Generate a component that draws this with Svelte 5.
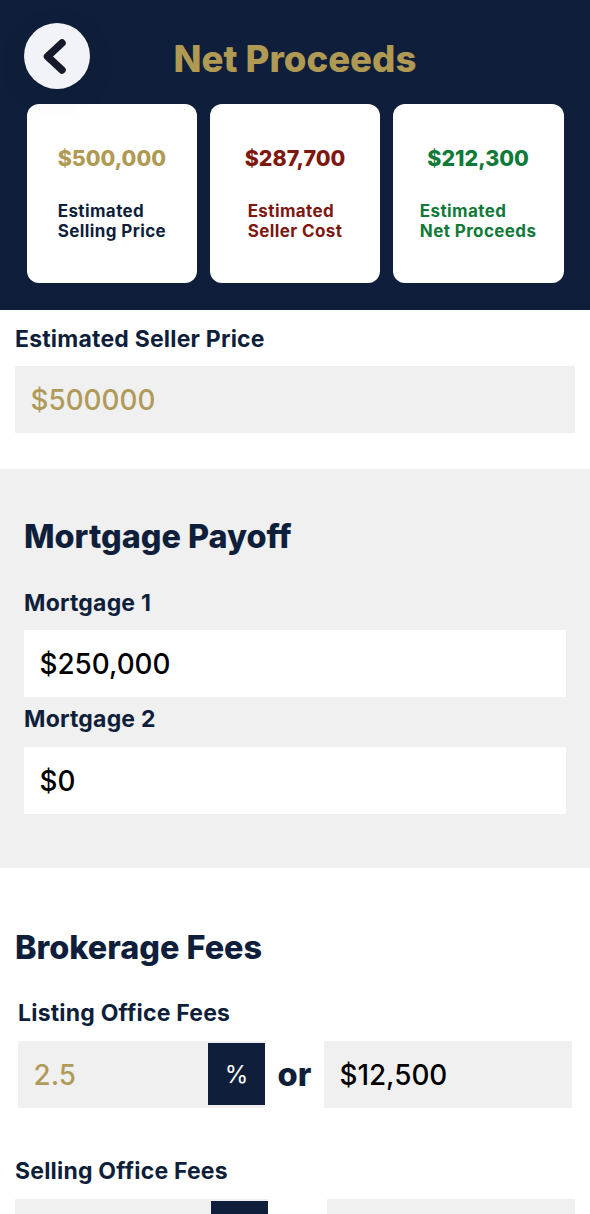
<script>
  const cards = [
    { value: '$500,000', label: ['Estimated', 'Selling Price'], tone: 'gold' },
    { value: '$287,700', label: ['Estimated', 'Seller Cost'], tone: 'red' },
    { value: '$212,300', label: ['Estimated', 'Net Proceeds'], tone: 'green' }
  ];
</script>

<div class="page">
  <header class="header">
    <div class="top">
      <h1>Net Proceeds</h1>
      <button class="back" aria-label="Back">
        <svg width="66" height="66" viewBox="0 0 66 66" fill="none">
          <path d="M38 20 L23.5 33.5 L38 47" stroke="#16192a" stroke-width="7.5" stroke-linecap="round" stroke-linejoin="round" />
        </svg>
      </button>
    </div>
    <div class="cards">
      {#each cards as c}
        <div class="card {c.tone}">
          <div class="value">{c.value}</div>
          <div class="label">{c.label[0]}<br />{c.label[1]}</div>
        </div>
      {/each}
    </div>
  </header>

  <section class="price">
    <div class="field-label">Estimated Seller Price</div>
    <div class="input grey gold-text">$500000</div>
  </section>

  <section class="mortgage">
    <h2>Mortgage Payoff</h2>
    <div class="field-label m1">Mortgage 1</div>
    <div class="input white">$250,000</div>
    <div class="field-label m2">Mortgage 2</div>
    <div class="input white">$0</div>
  </section>

  <section class="brokerage">
    <h2>Brokerage Fees</h2>
    <div class="fee listing">
      <div class="field-label">Listing Office Fees</div>
      <div class="fee-row">
        <div class="percent grey">
          <span class="gold-text">2.5</span>
          <div class="unit">%</div>
        </div>
        <div class="or">or</div>
        <div class="input grey amount">$12,500</div>
      </div>
    </div>
    <div class="fee selling">
      <div class="field-label">Selling Office Fees</div>
      <div class="fee-row">
        <div class="percent grey">
          <div class="unit"></div>
        </div>
        <div class="or"></div>
        <div class="input grey amount"></div>
      </div>
    </div>
  </section>
</div>

<style>
  :global(body) {
    margin: 0;
    background: #fff;
  }
  .page {
    width: 590px;
    height: 1214px;
    overflow: hidden;
    font-family: Inter, "Noto Sans", sans-serif;
    color: #0f1f3b;
  }
  .header {
    box-sizing: border-box;
    height: 310px;
    background: #0f1f3b;
    padding-top: 23px;
  }
  .top {
    display: flex;
    justify-content: center;
    height: 66px;
    position: relative;
  }
  .back {
    position: absolute;
    z-index: 1;
    left: 24px;
    top: 0;
    width: 66px;
    height: 66px;
    border: 0;
    padding: 0;
    border-radius: 50%;
    background: #f1f3f8;
    box-shadow: 0 8px 28px rgba(0, 0, 0, 0.1);
  }
  .back svg {
    display: block;
  }
  h1 {
    margin: 0;
    font-size: 36.6px;
    line-height: 72px;
    font-weight: 800;
    color: #b09a53;
  }
  .cards {
    display: flex;
    gap: 12.33px;
    padding: 15px 26.5px 0;
  }
  .card {
    box-sizing: border-box;
    flex: 1;
    height: 179px;
    background: #fff;
    border-radius: 12px;
    display: flex;
    flex-direction: column;
    align-items: center;
    padding-top: 40px;
  }
  .value {
    font-size: 21.4px;
    line-height: 28px;
    font-weight: 800;
  }
  .label {
    margin-top: 29px;
    font-size: 17px;
    line-height: 20px;
    font-weight: 700;
    letter-spacing: 0.4px;
  }
  .card.gold .value { color: #b09a53; }
  .card.gold .label { color: #0f1f3b; }
  .card.red .value, .card.red .label { color: #7d1710; }
  .card.green .value, .card.green .label { color: #107a39; }

  .field-label {
    font-size: 23px;
    line-height: 28px;
    font-weight: 700;
    letter-spacing: 0.2px;
    color: #0f1f3b;
  }
  .input {
    box-sizing: border-box;
    height: 67px;
    display: flex;
    align-items: center;
    padding-left: 15.5px;
    font-size: 27.8px;
    font-weight: 500;
    color: #000;
  }
  .grey { background: #f0f0f0; }
  .white { background: #fff; }
  .gold-text { color: #b09a5a; }
  .price {
    padding: 15px 15px 36px;
  }
  .price .input {
    margin-top: 13px;
  }
  .mortgage {
    box-sizing: border-box;
    height: 399px;
    background: #f0f0f0;
    padding: 46px 24px 0;
  }
  h2 {
    margin: 0;
    font-size: 32.4px;
    line-height: 44px;
    font-weight: 800;
    color: #0f1f3b;
  }
  .m1 { margin-top: 30px; margin-bottom: 13px; }
  .m2 { margin-top: 8px; margin-bottom: 14px; }
  .brokerage {
    padding-top: 58px;
  }
  .brokerage h2 {
    padding-left: 15px;
  }
  .fee.listing {
    padding: 29px 18px 0;
  }
  .fee.selling {
    padding: 49px 15px 0;
  }
  .fee .field-label {
    margin-bottom: 14px;
  }
  .fee-row {
    display: flex;
    align-items: center;
    height: 67px;
  }
  .percent {
    box-sizing: border-box;
    width: 247px;
    height: 67px;
    display: flex;
    justify-content: space-between;
    align-items: flex-start;
    padding-left: 15.5px;
    font-size: 27.8px;
    font-weight: 500;
  }
  .percent span {
    align-self: center;
  }
  .selling .percent {
    width: 253px;
    justify-content: flex-end;
  }
  .unit {
    width: 57px;
    height: 62px;
    margin-top: 2px;
    background: #0f1f3b;
    color: #fff;
    font-size: 24px;
    font-weight: 400;
    display: flex;
    align-items: center;
    justify-content: center;
  }
  .or {
    width: 59px;
    margin-top: -1px;
    text-align: center;
    font-size: 32.6px;
    font-weight: 800;
    color: #0f1f3b;
  }
  .amount {
    flex: 1;
  }
</style>
